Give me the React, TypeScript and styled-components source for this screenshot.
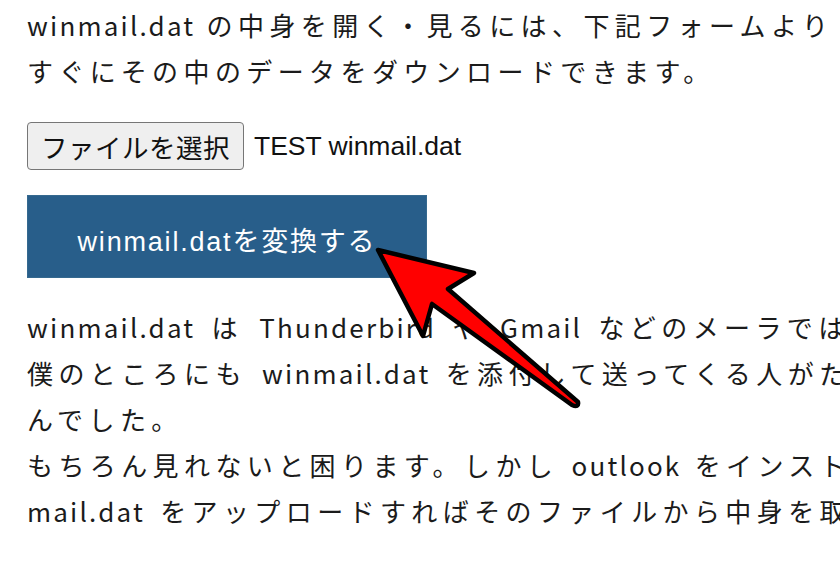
import styled, { createGlobalStyle } from "styled-components";

const GlobalStyle = createGlobalStyle`
    html, body {
        margin: 0;
        padding: 0;
        background: #ffffff;
    }
    body {
        width: 840px;
        height: 564px;
        overflow: hidden;
    }
`;

const Page = styled.main`
    position: relative;
    width: 840px;
    height: 564px;
    overflow: hidden;
    padding: 2px 0 0 27px;
    box-sizing: border-box;
    display: flex;
    flex-direction: column;
    align-items: flex-start;
    font-family: "Noto Sans CJK JP", "Noto Sans", sans-serif;
    color: #1b1b1b;
`;

const Text = styled.p<{ $gap?: number }>`
    margin: 0 0 ${(p) => p.$gap ?? 0}px;
    font-size: 26px;
    line-height: 46px;
    letter-spacing: 5.4px;
`;

// each line keeps its own spread, as a justified paragraph would
const Line = styled.span<{ $ws?: number }>`
    display: block;
    white-space: nowrap;
    word-spacing: ${(p) => p.$ws ?? 0}px;
`;

// latin words run tighter than the kana around them
const Latin = styled.span`
    letter-spacing: 2.2px;
`;

const FileRow = styled.div`
    display: flex;
    align-items: center;
    gap: 10px;
    margin-bottom: 25px;
`;

const PickButton = styled.button`
    height: 48px;
    width: 217px;
    padding: 0;
    border: 1px solid #767676;
    border-radius: 4px;
    background: #efefef;
    color: #111;
    font-family: "Noto Sans CJK JP", sans-serif;
    font-size: 26.5px;
    letter-spacing: 0.5px;
`;

const FileName = styled.span`
    font-family: "Liberation Sans", Arial, sans-serif;
    font-size: 26.5px;
    color: #111;
`;

const ConvertButton = styled.button`
    width: 400px;
    height: 83px;
    margin-bottom: 26px;
    border: 1px solid #35698f;
    background: #285e8a;
    color: #ffffff;
    font-family: "Liberation Sans", "Noto Sans CJK JP", sans-serif;
    font-size: 27px;
    letter-spacing: 1.8px;
    padding: 5px 0 0;
`;

const Pointer = styled.svg`
    position: absolute;
    left: 0;
    top: 0;
    pointer-events: none;
`;

// red callout arrow pointing at the convert button
const Arrow = () => (
    <Pointer width={840} height={564} viewBox="0 0 840 564">
        <path
            d="M378 250 L474 273 L448 289 L578 402 Q579 408 572 405 L432 304 L423 336 Z"
            fill="#ff0000"
            stroke="#000"
            strokeWidth={4.5}
            strokeLinejoin="round"
        />
    </Pointer>
);

export default function App() {
    return (
        <>
            <GlobalStyle />
            <Page>
                <Text $gap={28}>
                    <Line><Latin>winmail.dat</Latin> の中身を開く・見るには、下記フォームより</Line>
                    <Line>すぐにその中のデータをダウンロードできます。</Line>
                </Text>
                <FileRow>
                    <PickButton type="button">ファイルを選択</PickButton>
                    <FileName>TEST winmail.dat</FileName>
                </FileRow>
                <ConvertButton type="button">winmail.datを変換する</ConvertButton>
                <Text>
                    <Line $ws={5}>
                        <Latin>winmail.dat</Latin> は <Latin>Thunderbird</Latin> や <Latin>Gmail</Latin> などのメーラでは見れません。
                    </Line>
                    <Line $ws={4}>
                        僕のところにも <Latin>winmail.dat</Latin> を添付して送ってくる人がたまにいて、中身が見れませ
                    </Line>
                    <Line>んでした。</Line>
                    <Line $ws={2}>
                        もちろん見れないと困ります。しかし <Latin>outlook</Latin> をインストールしなくても、ここに <Latin>win</Latin>
                    </Line>
                    <Line $ws={4}>
                        <Latin>mail.dat</Latin> をアップロードすればそのファイルから中身を取り出せます。
                    </Line>
                </Text>
                <Arrow />
            </Page>
        </>
    );
}
